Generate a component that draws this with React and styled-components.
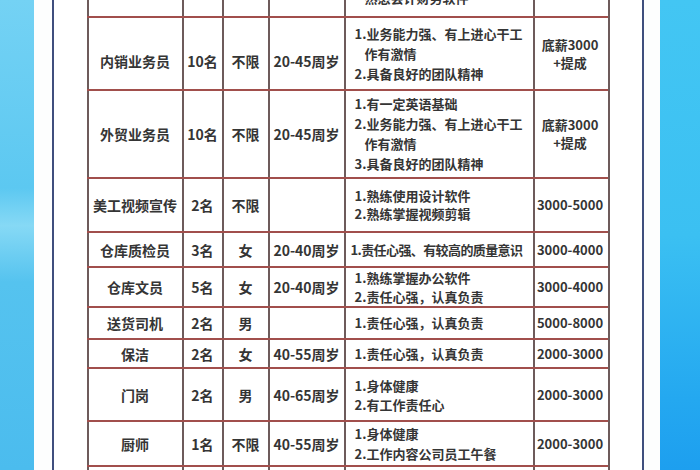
import React from "react";
import styled, { createGlobalStyle } from "styled-components";

const GlobalStyle = createGlobalStyle`
  html, body {
    margin: 0;
    padding: 0;
    background: #ffffff;
  }
  body {
    font-family: "Noto Sans CJK SC", "Liberation Sans", sans-serif;
  }
`;

const Screen = styled.div`
  display: flex;
  width: 700px;
  height: 470px;
  overflow: hidden;
`;

const Band = styled.div`
  flex: 0 0 ${(p) => p.width}px;
  background: ${(p) => p.bg};
`;

const Paper = styled.div`
  flex: 0 0 626px;
  background: #fdfefe;
  padding: 0 16px 0 18px;
  box-sizing: border-box;
  display: flex;
`;

const Frame = styled.div`
  flex: 1;
  border-left: 2px solid #3f4f7e;
  border-right: 2px solid #3f4f7e;
  background: #ffffff;
  display: flex;
  justify-content: center;
`;

const Table = styled.div`
  width: 521px;
  margin-top: -42px;
  border-right: 2px solid #6d5b5b;
  align-self: flex-start;
  color: #353535;
  font-weight: 700;
`;

const Row = styled.div`
  display: grid;
  grid-template-columns: 95px 40px 46px 76px 189px 73px;
  height: ${(p) => p.h}px;
  border-bottom: 2px solid #a14f4c;
  box-sizing: border-box;
`;

const Cell = styled.div`
  border-left: 2px solid #6d5b5b;
  display: flex;
  flex-direction: column;
  justify-content: ${(p) => (p.bottom ? "flex-end" : "center")};
  align-items: ${(p) => (p.left ? "flex-start" : "center")};
  padding-left: ${(p) => (p.left ? p.pl ?? 9 : 0)}px;
  padding-top: ${(p) => p.shift || 0}px;
  padding-bottom: ${(p) => p.pb || 0}px;
  font-size: ${(p) => p.size || 13}px;
  line-height: ${(p) => p.lh || 20}px;
  letter-spacing: ${(p) => p.ls || 0}px;
  white-space: nowrap;
  overflow: visible;
`;

const Line = styled.div`
  padding-left: ${(p) => (p.indent ? 10 : 0)}px;
`;

const rows = [
  {
    h: 60,
    partial: true,
    req: [["", "熟悉会计财务软件"]],
    pay: [],
  },
  {
    h: 73,
    shift: 14,
    name: "内销业务员",
    n: "10名",
    sex: "不限",
    age: "20-45周岁",
    req: [["1.业务能力强、有上进心干工", "作有激情"], ["2.具备良好的团队精神"]],
    pay: ["底薪3000", "+提成"],
  },
  {
    h: 88,
    name: "外贸业务员",
    n: "10名",
    sex: "不限",
    age: "20-45周岁",
    req: [
      ["1.有一定英语基础"],
      ["2.业务能力强、有上进心干工", "作有激情"],
      ["3.具备良好的团队精神"],
    ],
    pay: ["底薪3000", "+提成"],
  },
  {
    h: 54,
    lh: 18,
    name: "美工视频宣传",
    n: "2名",
    sex: "不限",
    age: "",
    req: [["1.熟练使用设计软件"], ["2.熟练掌握视频剪辑"]],
    pay: ["3000-5000"],
  },
  {
    h: 35,
    pl: 5,
    ls: -0.6,
    name: "仓库质检员",
    n: "3名",
    sex: "女",
    age: "20-40周岁",
    req: [["1.责任心强、有较高的质量意识"]],
    pay: ["3000-4000"],
  },
  {
    h: 40,
    lh: 19,
    name: "仓库文员",
    n: "5名",
    sex: "女",
    age: "20-40周岁",
    req: [["1.熟练掌握办公软件"], ["2.责任心强，认真负责"]],
    pay: ["3000-4000"],
  },
  {
    h: 32,
    name: "送货司机",
    n: "2名",
    sex: "男",
    age: "",
    req: [["1.责任心强，认真负责"]],
    pay: ["5000-8000"],
  },
  {
    h: 29,
    name: "保洁",
    n: "2名",
    sex: "女",
    age: "40-55周岁",
    req: [["1.责任心强，认真负责"]],
    pay: ["2000-3000"],
  },
  {
    h: 53,
    lh: 19,
    name: "门岗",
    n: "2名",
    sex: "男",
    age: "40-65周岁",
    req: [["1.身体健康"], ["2.有工作责任心"]],
    pay: ["2000-3000"],
  },
  {
    h: 45,
    name: "厨师",
    n: "1名",
    sex: "不限",
    age: "40-55周岁",
    req: [["1.身体健康"], ["2.工作内容公司员工午餐"]],
    pay: ["2000-3000"],
  },
  { h: 40, req: [], pay: [] },
];

function JobRow({ row }) {
  return (
    <Row h={row.h}>
      <Cell size={14} shift={row.shift}>{row.name}</Cell>
      <Cell size={14} shift={row.shift}>{row.n}</Cell>
      <Cell size={14} shift={row.shift}>{row.sex}</Cell>
      <Cell size={14} shift={row.shift}>{row.age}</Cell>
      <Cell
        left
        bottom={row.partial}
        pb={row.partial ? 8 : 0}
        lh={row.lh}
        pl={row.pl}
        ls={row.ls}
      >
        {row.req.map((item, i) =>
          item.map((text, j) => (
            <Line key={i + "-" + j} indent={j > 0}>
              {text}
            </Line>
          ))
        )}
      </Cell>
      <Cell lh={18}>
        {row.pay.map((p) => (
          <Line key={p}>{p}</Line>
        ))}
      </Cell>
    </Row>
  );
}

function App() {
  return (
    <>
      <GlobalStyle />
      <Screen>
        <Band
          width={34}
          bg="linear-gradient(180deg, #74d2f4 0%, #5cc8f1 40%, #86d9f5 48%, #55c3ef 60%, #4bbcee 100%)"
        />
        <Paper>
          <Frame>
            <Table>
              {rows.map((row, i) => (
                <JobRow key={i} row={row} />
              ))}
            </Table>
          </Frame>
        </Paper>
        <Band
          width={40}
          bg="linear-gradient(180deg, #43c6f3 0%, #3bc0f2 50%, #24a8f0 85%, #1d9fef 100%)"
        />
      </Screen>
    </>
  );
}

export default App;
